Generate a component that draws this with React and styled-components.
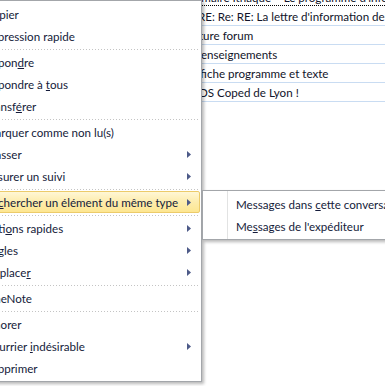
import React from "react";
import styled, { createGlobalStyle, css } from "styled-components";

const GlobalStyle = createGlobalStyle`
  html, body {
    margin: 0;
    padding: 0;
    background: #ffffff;
    overflow: hidden;
  }
  body {
    font-family: Lato, "Liberation Sans", sans-serif;
    font-size: 11.6px;
  }
`;

const Screen = styled.div`
  position: relative;
  width: 385px;
  height: 386px;
  overflow: hidden;
  background: #ffffff;
`;

/* mail list behind the menu */
const MailList = styled.div`
  display: flex;
  flex-direction: column;
  margin-top: -12px;
`;

const MailRow = styled.div`
  display: flex;
  align-items: center;
  height: 19px;
  box-sizing: border-box;
  padding-left: ${(p) => p.$indent}px;
  border-bottom: 1px solid ${(p) => (p.$focus ? "transparent" : "#c9dcf2")};
  color: #11142a;
  white-space: nowrap;
  ${(p) =>
    p.$focus &&
    css`
      background-image: linear-gradient(to right, #000 50%, transparent 50%);
      background-size: 2px 1px;
      background-repeat: repeat-x;
      background-position: left bottom;
    `}
`;

/* context menu */
const Menu = styled.div`
  position: absolute;
  left: ${(p) => p.$left}px;
  top: ${(p) => p.$top}px;
  width: ${(p) => p.$width}px;
  box-sizing: border-box;
  padding: 2px 0;
  background: #ffffff;
  border: 1px solid #a3a6aa;
  box-shadow: 2px 2px 3px rgba(0, 0, 0, 0.28);
  z-index: ${(p) => p.$layer};

  &::before {
    content: "";
    position: absolute;
    left: 24px;
    top: 0;
    bottom: 0;
    width: 1px;
    background: #e2e3e3;
  }
`;

const Item = styled.div`
  position: relative;
  display: flex;
  align-items: center;
  height: 22px;
  box-sizing: border-box;
  margin: 0 1px;
  padding: 0 8px 0 31px;
  border: 1px solid transparent;
  border-radius: 2px;
  color: #141b3a;
  white-space: nowrap;
  ${(p) =>
    p.$active &&
    css`
      border-color: #eccb6a;
      background: linear-gradient(#fff7d6 0%, #fdedb0 45%, #fde691 100%);
    `}
`;

const Label = styled.span`
  flex: 1;
  & u {
    text-decoration: underline;
    text-underline-offset: 1px;
  }
`;

const Separator = styled.div`
  height: 4px;
  margin: 0 2px 0 26px;
  display: flex;
  align-items: center;

  &::after {
    content: "";
    flex: 1;
    height: 1px;
    background-image: linear-gradient(to right, #c4c4c4 50%, transparent 50%);
    background-size: 3px 1px;
    background-repeat: repeat-x;
  }
`;

const Submenu = styled(Menu)`
  left: 248px;
  top: -2px;
`;

const Arrow = () => (
  <svg width="4" height="7" viewBox="0 0 4 7">
    <polygon points="0,0 4,3.5 0,7" fill="#4d5a88" />
  </svg>
);

const mnemonic = (text) => {
  const i = text.indexOf("&");
  if (i < 0) return text;
  return (
    <>
      {text.slice(0, i)}
      <u>{text[i + 1]}</u>
      {text.slice(i + 2)}
    </>
  );
};

const mails = [
  { text: "Sommaire Ithaque – Le programme d'information", indent: 179, focus: true },
  { text: "RE: Re: RE: La lettre d'information de l'association", indent: 198 },
  { text: "Clôture forum", indent: 182 },
  { text: "Renseignements", indent: 194 },
  { text: "Affiche programme et texte", indent: 189 },
  { text: "DS Coped de Lyon !", indent: 199 },
];

const SEP = { sep: true };

const menuItems = [
  { label: "Copier" },
  { label: "Impression rapide" },
  SEP,
  { label: "Répon&dre" },
  { label: "Répondre à &tous" },
  { label: "Transf&érer" },
  SEP,
  { label: "Marquer comme non lu(s)" },
  { label: "Classer", sub: true },
  { label: "Assurer un suivi", sub: true },
  SEP,
  { label: "Re&chercher un élément du même type", sub: true, open: true },
  SEP,
  { label: "Acti&ons rapides", sub: true },
  { label: "Rè&gles", sub: true },
  { label: "Déplace&r", sub: true },
  SEP,
  { label: "OneNote" },
  SEP,
  { label: "Ignorer" },
  { label: "Courrier &indésirable", sub: true },
  { label: "Supprimer" },
];

const subItems = [
  "Messages dans &cette conversation",
  "Me&ssages de l'expéditeur",
];

export default function App() {
  return (
    <Screen>
      <GlobalStyle />
      <MailList>
        {mails.map((m) => (
          <MailRow key={m.text} $indent={m.indent} $focus={m.focus}>
            {m.text}
          </MailRow>
        ))}
      </MailList>

      <Menu $left={-49} $top={0} $width={251} $layer={2}>
        {menuItems.map((it, i) =>
          it.sep ? (
            <Separator key={i} />
          ) : (
            <Item key={i} $active={it.open}>
              <Label>{mnemonic(it.label)}</Label>
              {it.sub && <Arrow />}
              {it.open && (
                <Submenu $width={240} $layer={3}>
                  {subItems.map((s) => (
                    <Item key={s}>
                      <Label>{mnemonic(s)}</Label>
                    </Item>
                  ))}
                </Submenu>
              )}
            </Item>
          )
        )}
      </Menu>
    </Screen>
  );
}
